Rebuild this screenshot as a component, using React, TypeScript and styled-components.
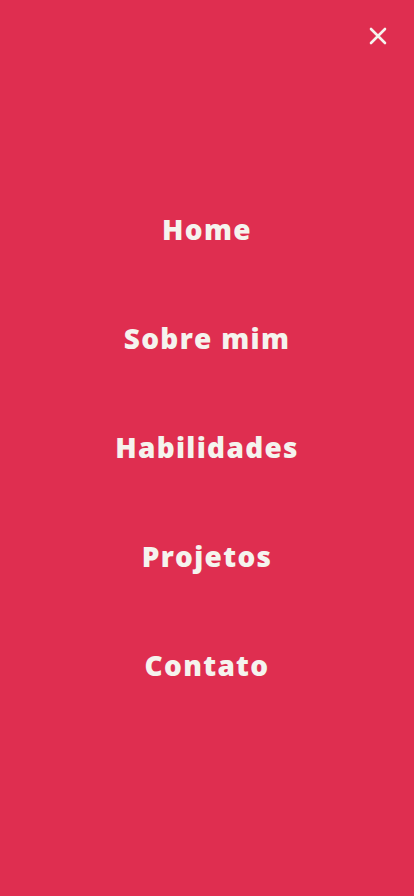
import { FC } from "react"
import styled, { createGlobalStyle } from "styled-components"

const GlobalStyle = createGlobalStyle`
    html, body {
        margin: 0;
        padding: 0;
        background: #df2e50;
    }
`

const StyledMenu = styled.div`
    position: relative;
    width: 100%;
    height: 896px;
    background-color: #df2e50;
    display: flex;
    align-items: center;
    justify-content: center;
    font-family: "Open Sans", "Liberation Sans", sans-serif;
`

const CloseButton = styled.button`
    position: absolute;
    top: 26px;
    right: 26px;
    width: 20px;
    height: 20px;
    padding: 0;
    border: none;
    background: transparent;
    cursor: pointer;
    display: flex;
    align-items: center;
    justify-content: center;
`

const NavList = styled.ul`
    list-style: none;
    margin: 0 0 2px;
    padding: 0;
    display: flex;
    flex-direction: column;
    align-items: center;
    gap: 70px;
`

const NavLink = styled.a`
    display: block;
    color: #f5f3ee;
    text-decoration: none;
    font-size: 28px;
    font-weight: 800;
    line-height: 39px;
    letter-spacing: 1.3px;
`

const links = ["Home", "Sobre mim", "Habilidades", "Projetos", "Contato"]

const App: FC = () => (
    <>
        <GlobalStyle />
        <StyledMenu>
            <CloseButton aria-label="Fechar menu">
                <svg width="18" height="18" viewBox="0 0 18 18">
                    <path d="M2 2 L16 16 M16 2 L2 16" stroke="#f5f3ee" strokeWidth="2.6" strokeLinecap="round" />
                </svg>
            </CloseButton>
            <nav>
                <NavList>
                    {links.map(l => (
                        <li key={l}>
                            <NavLink href="#">{l}</NavLink>
                        </li>
                    ))}
                </NavList>
            </nav>
        </StyledMenu>
    </>
)

export default App
